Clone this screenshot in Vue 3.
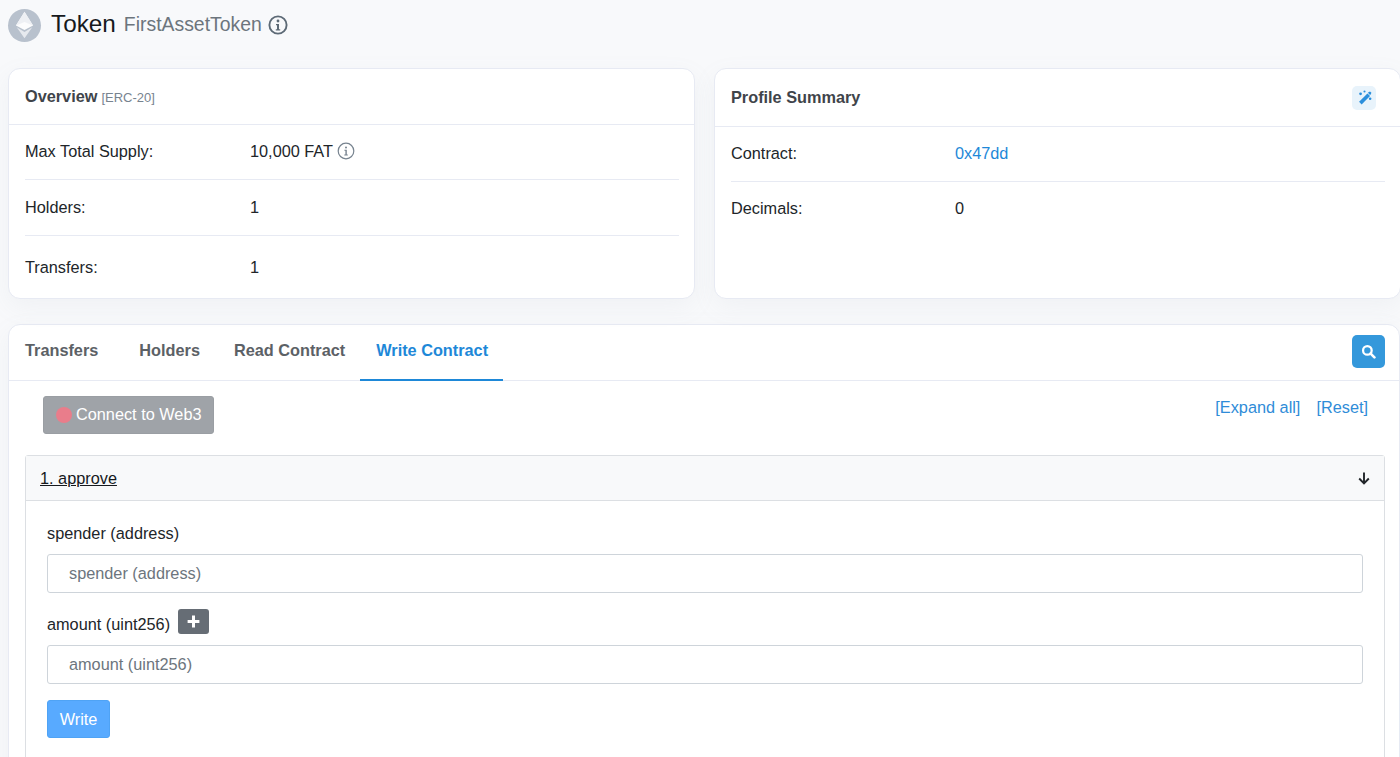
<template>
  <div class="page">
    <header class="head">
      <span class="logo">
        <svg viewBox="0 0 24 36" width="22" height="32">
          <path d="M12 1 L23 18.5 L12 24.5 L1 18.5 Z" fill="#fff" opacity=".95" />
          <path d="M12 1 L23 18.5 L12 14 L1 18.5 Z" fill="#eef0f4" />
          <path d="M12 27 L22 21 L12 35 L2 21 Z" fill="#e6e9ee" />
        </svg>
      </span>
      <h1 class="title">Token</h1>
      <span class="subtitle">FirstAssetToken</span>
      <svg class="info info-big" viewBox="0 0 20 20" width="20" height="20">
        <circle cx="10" cy="10" r="8.6" fill="none" stroke="currentColor" stroke-width="1.9" />
        <circle cx="10" cy="6" r="1.4" fill="currentColor" />
        <path d="M8 9h3v5.2h1.2v1.3H7.800v-1.3H9V10.300H8z" fill="currentColor" />
      </svg>
    </header>

    <section class="cards">
      <div class="card">
        <div class="card-head left-head">
          <span class="card-title">Overview</span>
          <span class="tag">[ERC-20]</span>
        </div>
        <div class="rows rows-left">
          <div class="row first">
            <span class="key">Max Total Supply:</span>
            <span class="val">
              10,000 FAT
              <svg class="info" viewBox="0 0 18 18" width="18" height="18">
                <circle cx="9" cy="9" r="7.8" fill="none" stroke="currentColor" stroke-width="1.2" />
                <circle cx="9" cy="5.400" r="1" fill="currentColor" />
                <path d="M7.400 7.800h2.400v4.700h1v.9H7.300v-.9h1.100V8.700h-1z" fill="currentColor" />
              </svg>
            </span>
          </div>
          <div class="row second">
            <span class="key">Holders:</span>
            <span class="val">1</span>
          </div>
          <div class="row third">
            <span class="key">Transfers:</span>
            <span class="val">1</span>
          </div>
        </div>
      </div>

      <div class="card">
        <div class="card-head right-head">
          <span class="card-title">Profile Summary</span>
          <button class="wand" type="button">
            <svg viewBox="0 0 16 16" width="17" height="17">
              <path d="M10.800 4.200l2.400 2.400L5.300 14.500 2.900 12.100z" fill="#2b8fdc" />
              <path d="M11.800 3l1.400-.7 1.300 1.300-.7 1.500-.6.500-2-2z" fill="#2b8fdc" />
              <circle cx="4.300" cy="4.500" r="1.300" fill="#2b8fdc" />
              <circle cx="8" cy="2.300" r="1" fill="#2b8fdc" />
              <circle cx="13.300" cy="9.200" r="1.200" fill="#2b8fdc" />
            </svg>
          </button>
        </div>
        <div class="rows rows-right">
          <div class="row r-first">
            <span class="key">Contract:</span>
            <span class="val link">0x47dd</span>
          </div>
          <div class="row r-second">
            <span class="key">Decimals:</span>
            <span class="val">0</span>
          </div>
        </div>
      </div>
    </section>

    <section class="card main">
      <nav class="tabs">
        <a
          v-for="t in tabs"
          :key="t.name"
          class="tab"
          :class="[t.cls, { active: t.active }]"
        >{{ t.name }}</a>
        <button class="search" type="button">
          <svg viewBox="0 0 16 16" width="15" height="15">
            <circle cx="6.800" cy="6.800" r="4.600" fill="none" stroke="#fff" stroke-width="2.400" />
            <path d="M10.300 10.300L14.300 14.300" stroke="#fff" stroke-width="2.800" stroke-linecap="round" />
          </svg>
        </button>
      </nav>

      <div class="tools">
        <button class="connect" type="button"><i class="dot"></i>Connect to Web3</button>
        <div class="links">
          <a>[Expand all]</a>
          <a>[Reset]</a>
        </div>
      </div>

      <div class="accordion">
        <div class="acc-head">
          <span class="acc-title">1. approve</span>
          <svg viewBox="0 0 14 14" width="14" height="14">
            <path d="M7 1.500V12M2.200 7.500L7 12.300l4.800-4.800" fill="none" stroke="#212529" stroke-width="1.900" />
          </svg>
        </div>
        <div class="acc-body">
          <label class="label spender">spender (address)</label>
          <input class="field" type="text" placeholder="spender (address)" />
          <div class="label amount">
            amount (uint256)
            <button class="plus" type="button">
              <svg viewBox="0 0 14 14" width="15" height="15">
                <path d="M7 1.500v11M1.500 7h11" stroke="#fff" stroke-width="2.800" />
              </svg>
            </button>
          </div>
          <input class="field" type="text" placeholder="amount (uint256)" />
          <button class="write" type="button">Write</button>
        </div>
      </div>
    </section>
  </div>
</template>

<script setup>
const tabs = [
  { name: 'Transfers', cls: 't-transfers' },
  { name: 'Holders', cls: 't-holders' },
  { name: 'Read Contract', cls: 't-read' },
  { name: 'Write Contract', cls: 't-write', active: true }
]
</script>

<style scoped>
.page {
  height: 757px;
  overflow: hidden;
  box-sizing: border-box;
  padding-left: 8px;
  background: #f8f9fb;
  color: #212529;
  font-family: "Liberation Sans", Arial, sans-serif;
  font-size: 16.300px;
}

.head {
  display: flex;
  align-items: center;
  height: 68px;
  padding-bottom: 18px;
  box-sizing: border-box;
}

.logo {
  width: 33px;
  height: 33px;
  border-radius: 50%;
  background: #b8c1cd;
  display: flex;
  align-items: center;
  justify-content: center;
  margin-right: 10px;
}

.logo svg {
  width: 19px;
  height: 28px;
}

.title {
  margin: 0 8px 3px 0;
  font-size: 24.300px;
  font-weight: 400;
  color: #16191d;
}

.subtitle {
  font-size: 19.400px;
  color: #6c757d;
  margin-right: 6px;
  margin-bottom: 2px;
}

.info {
  color: #77838f;
  vertical-align: -2px;
}

.info-big {
  color: #5d6a76;
}

.cards {
  display: grid;
  grid-template-columns: 687px 687px;
  gap: 19px;
  height: 230px;
  margin-bottom: 26px;
}

.card {
  background: #fff;
  border: 1px solid #e7eaf3;
  border-radius: 12px;
  box-shadow: 0 8px 24px rgba(140, 152, 164, 0.08);
  box-sizing: border-box;
}

.card-head {
  display: flex;
  align-items: center;
  border-bottom: 1px solid #e7eaf3;
  padding: 0 16px;
  box-sizing: border-box;
}

.left-head {
  height: 56px;
}

.right-head {
  height: 58px;
  justify-content: space-between;
  padding-right: 24px;
}

.card-title {
  font-weight: 700;
  color: #3f444a;
}

.tag {
  margin-left: 4px;
  font-size: 13px;
  color: #77838f;
  margin-top: 1px;
}

.wand {
  width: 24px;
  height: 24px;
  padding: 0;
  border: 0;
  border-radius: 5px;
  background: #e8f3fb;
  display: flex;
  align-items: center;
  justify-content: center;
}

.rows {
  padding: 0 15px 0 16px;
}

.row {
  display: flex;
  align-items: center;
  box-sizing: border-box;
  color: #212529;
}

.key {
  width: 225px;
  flex-shrink: 0;
}

.rows-right .key {
  width: 224px;
}

.val {
  display: flex;
  align-items: center;
  gap: 4px;
}

.link {
  color: #1e88d8;
}

.first { height: 55px; padding-bottom: 2px; border-bottom: 1px solid #e7eaf3; }
.second { height: 56px; border-bottom: 1px solid #e7eaf3; }
.third { height: 62px; }
.r-first { height: 55px; padding-bottom: 2px; border-bottom: 1px solid #e7eaf3; }
.r-second { height: 54px; padding-bottom: 2px; }

.main {
  height: 460px;
  padding-bottom: 16px;
}

.tabs {
  display: flex;
  align-items: stretch;
  height: 56px;
  border-bottom: 1px solid #e7eaf3;
  box-sizing: border-box;
}

.tab {
  display: flex;
  align-items: center;
  padding: 0 16px 3px;
  font-weight: 700;
  color: #5c6166;
  margin-bottom: -1px;
  border-bottom: 2px solid transparent;
  box-sizing: border-box;
}

.t-transfers { margin-right: 9px; }
.t-holders { margin-right: 2px; }
.t-read { margin-right: 0; padding-right: 15px; }
.t-write { padding-right: 15px; }

.active {
  color: #1e88d8;
  border-bottom-color: #1e88d8;
}

.search {
  margin: 10px 14px 0 auto;
  width: 33px;
  height: 33px;
  padding: 0;
  border: 0;
  border-radius: 5px;
  background: #3498db;
  display: flex;
  align-items: center;
  justify-content: center;
}

.tools {
  display: flex;
  justify-content: space-between;
  align-items: flex-start;
  height: 74px;
  padding: 15px 31px 0 34px;
  box-sizing: border-box;
}

.connect {
  display: flex;
  align-items: center;
  width: 171px;
  height: 38px;
  padding: 0 0 1px 12px;
  border: 1px solid #9a9ea3;
  border-radius: 3px;
  background: #9fa3a8;
  color: #fff;
  font: 16.300px "Liberation Sans", Arial, sans-serif;
}

.dot {
  display: block;
  flex-shrink: 0;
  width: 16px;
  height: 16px;
  border-radius: 50%;
  background: #e97d8b;
  margin-right: 4px;
}

.links {
  display: flex;
  gap: 16px;
  color: #2f8cd8;
  padding-top: 2px;
}

.accordion {
  margin: 0 14px 0 16px;
  border: 1px solid #dcdfe3;
  border-radius: 3px;
  height: 400px;
}

.acc-head {
  display: flex;
  align-items: center;
  justify-content: space-between;
  height: 45px;
  padding: 0 13px 0 14px;
  background: #f8f9fa;
  border-bottom: 1px solid #dcdfe3;
  box-sizing: border-box;
}

.acc-title {
  text-decoration: underline;
  color: #16191d;
}

.acc-body {
  padding: 21px 21px 0;
}

.label {
  display: flex;
  align-items: center;
  height: 24px;
  margin-bottom: 8px;
  color: #212529;
  box-sizing: border-box;
}

.spender {
  padding-bottom: 2px;
}

.amount {
  margin-top: 19px;
  margin-bottom: 8px;
  gap: 8px;
  height: 25px;
}

.field {
  display: block;
  width: 100%;
  height: 39px;
  box-sizing: border-box;
  padding: 0 21px;
  border: 1px solid #ced4da;
  border-radius: 3px;
  background: #fff;
  font: 16.300px "Liberation Sans", Arial, sans-serif;
  color: #495057;
}

.field::placeholder {
  color: #6c757d;
  opacity: 1;
}

.plus {
  width: 31px;
  height: 25px;
  margin-bottom: 6px;
  padding: 0;
  border: 0;
  border-radius: 3px;
  background: #666d75;
  display: flex;
  align-items: center;
  justify-content: center;
}

.write {
  display: block;
  width: 63px;
  height: 38px;
  margin-top: 16px;
  padding: 0;
  border: 1px solid #4fa3f5;
  border-radius: 3px;
  background: #58aaff;
  color: #fff;
  font: 16.300px "Liberation Sans", Arial, sans-serif;
}
</style>

<style>
html, body {
  margin: 0;
  overflow: hidden;
  background: #f8f9fb;
}
</style>
